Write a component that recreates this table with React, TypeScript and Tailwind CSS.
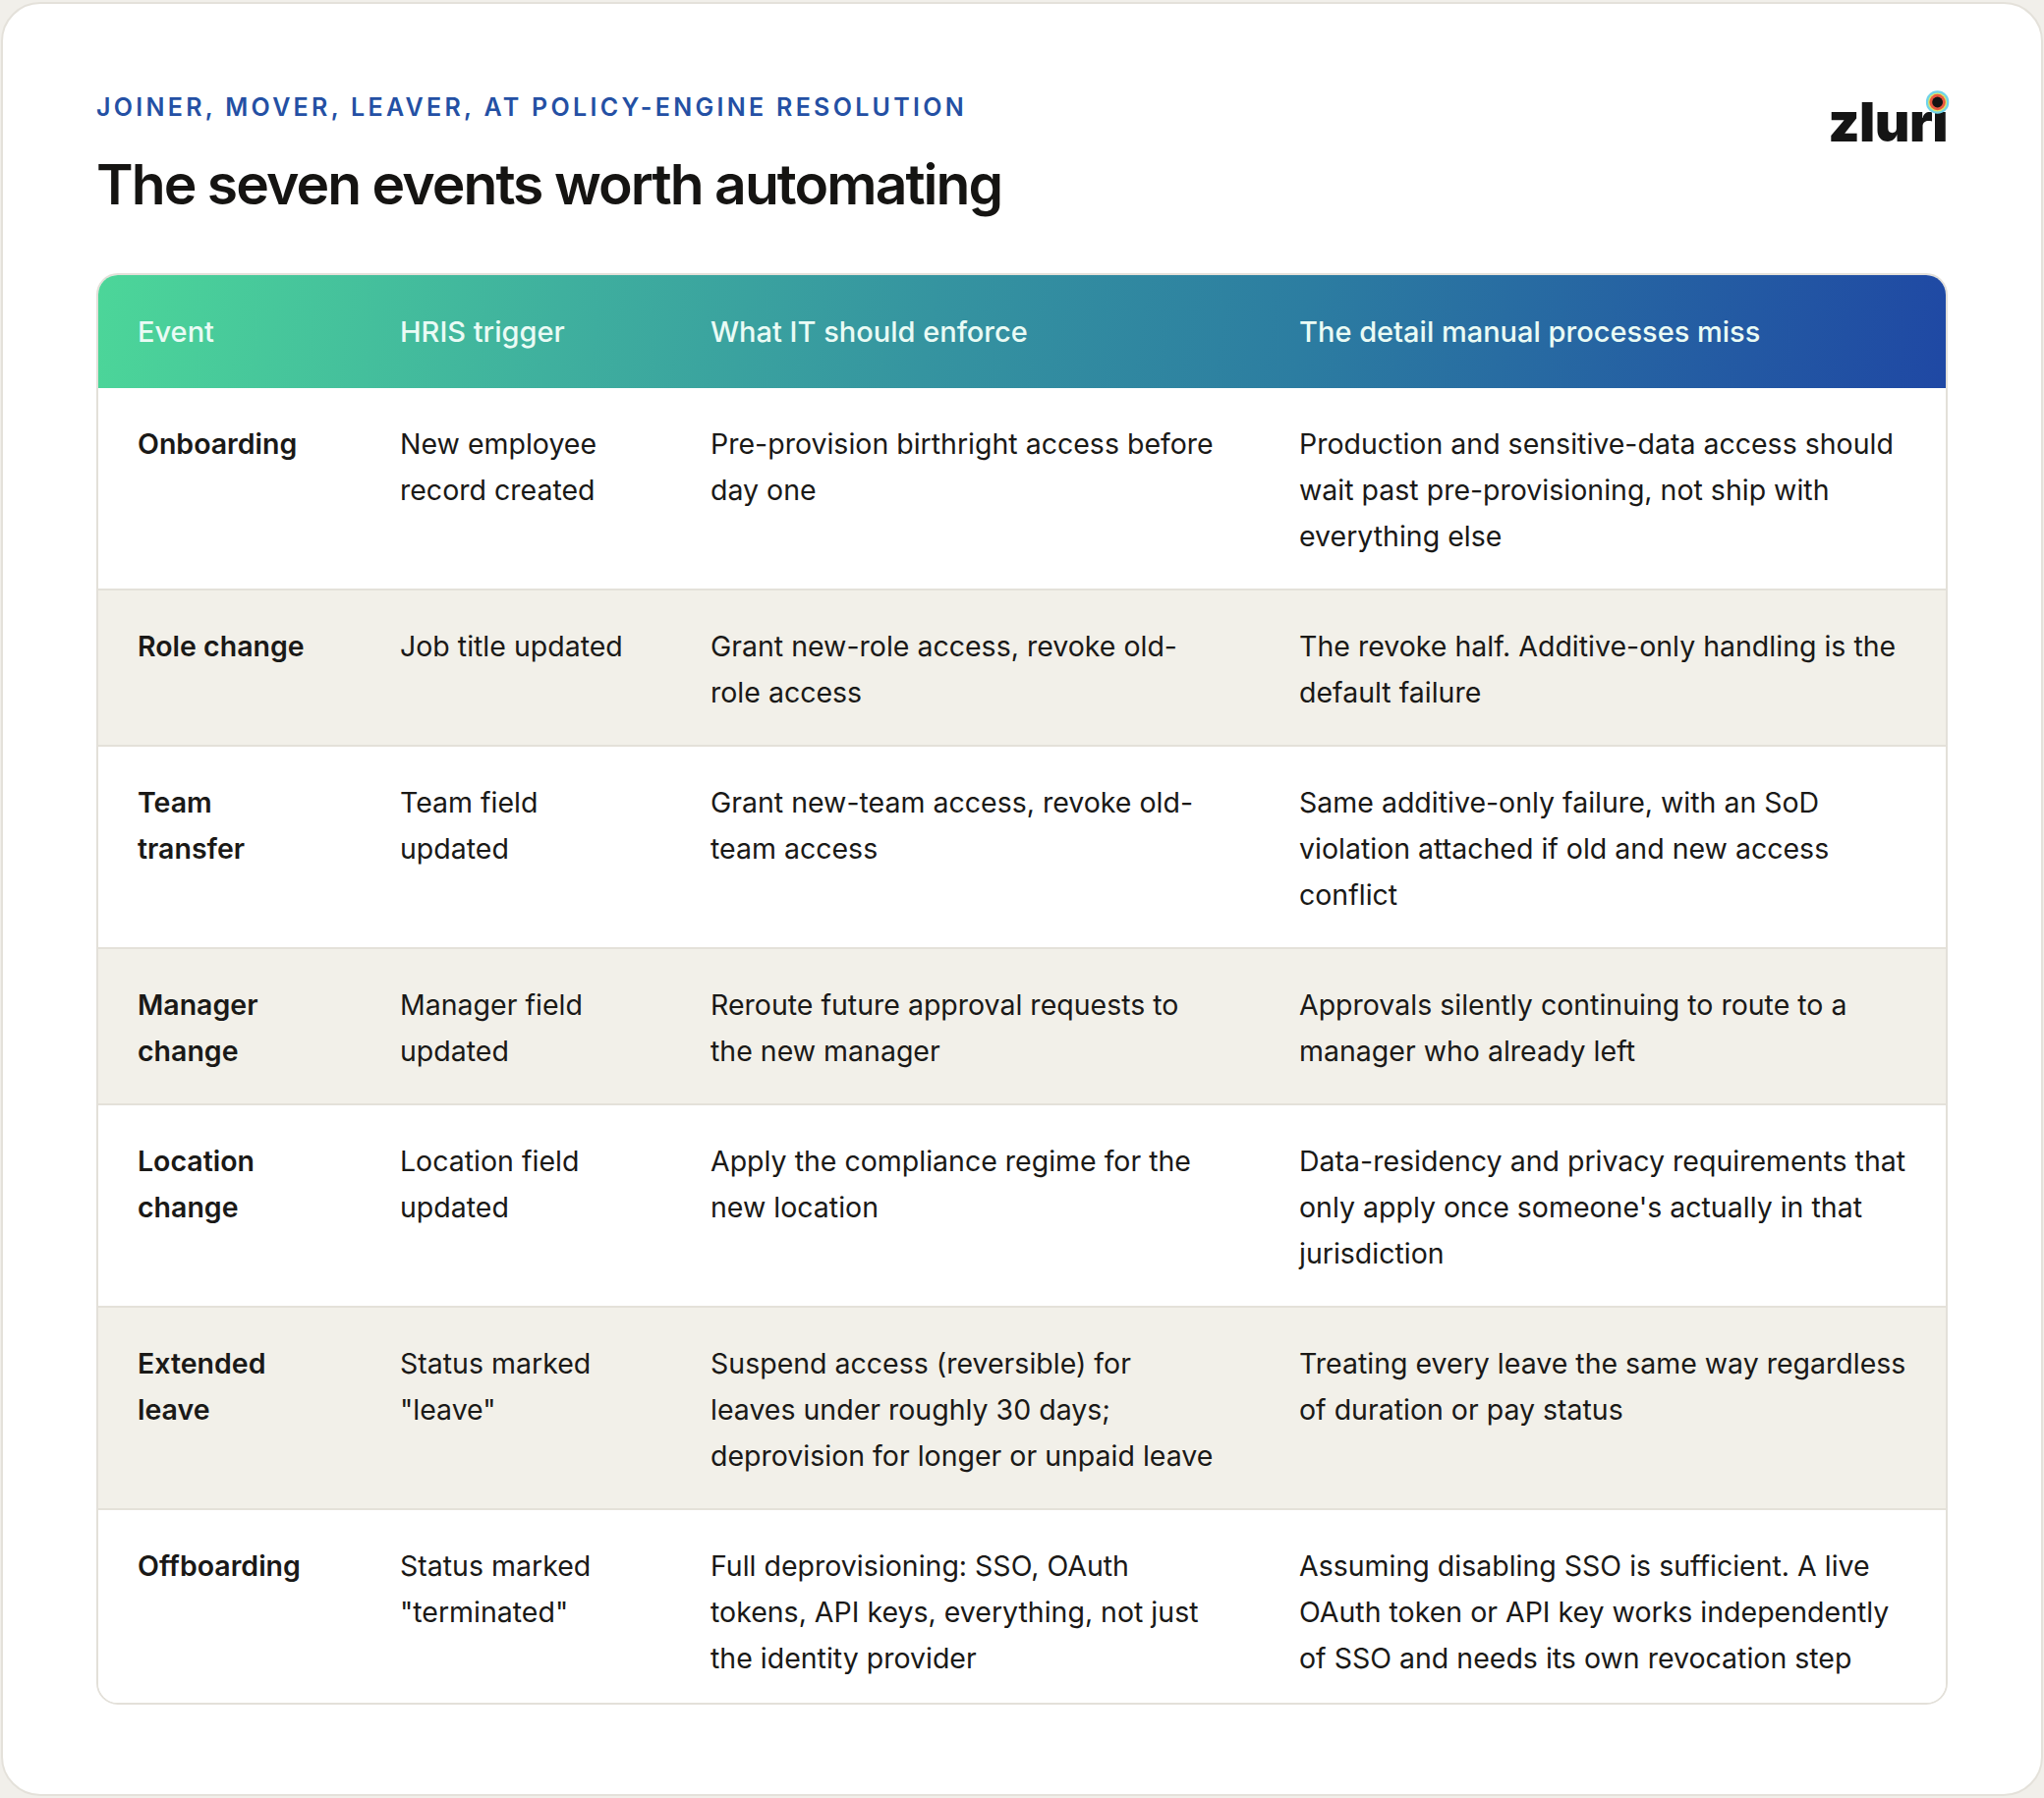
const rows = [
  {
    event: "Onboarding",
    trigger: "New employee record created",
    enforce: "Pre-provision birthright access before day one",
    miss: "Production and sensitive-data access should wait past pre-provisioning, not ship with everything else",
  },
  {
    event: "Role change",
    trigger: "Job title updated",
    enforce: "Grant new-role access, revoke old-role access",
    miss: "The revoke half. Additive-only handling is the default failure",
  },
  {
    event: "Team transfer",
    trigger: "Team field updated",
    enforce: "Grant new-team access, revoke old-team access",
    miss: "Same additive-only failure, with an SoD violation attached if old and new access conflict",
  },
  {
    event: "Manager change",
    trigger: "Manager field updated",
    enforce: "Reroute future approval requests to the new manager",
    miss: "Approvals silently continuing to route to a manager who already left",
  },
  {
    event: "Location change",
    trigger: "Location field updated",
    enforce: "Apply the compliance regime for the new location",
    miss: "Data-residency and privacy requirements that only apply once someone's actually in that jurisdiction",
  },
  {
    event: "Extended leave",
    trigger: 'Status marked "leave"',
    enforce: "Suspend access (reversible) for leaves under roughly 30 days; deprovision for longer or unpaid leave",
    miss: "Treating every leave the same way regardless of duration or pay status",
  },
  {
    event: "Offboarding",
    trigger: 'Status marked "terminated"',
    enforce: "Full deprovisioning: SSO, OAuth tokens, API keys, everything, not just the identity provider",
    miss: "Assuming disabling SSO is sufficient. A live OAuth token or API key works independently of SSO and needs its own revocation step",
  },
];

const ZluriLogo = () => (
  <div className="flex items-end text-[55px] leading-none font-black tracking-[-0.01em] text-[#151515]">
    <span>zlur</span>
    <span className="relative">
      ı
      {/* the dot of the i is a coloured ring */}
      <svg
        viewBox="0 0 24 24"
        className="absolute left-1/2 top-[-5px] h-[24px] w-[24px] -translate-x-[60%]"
      >
        <circle cx="12" cy="12" r="11.8" fill="#6fd4ea" />
        <circle cx="12" cy="12" r="9.6" fill="#d9e76c" />
        <circle cx="12" cy="12" r="8.2" fill="#ea5840" />
        <circle cx="12" cy="12" r="5.4" fill="#141414" />
      </svg>
    </span>
  </div>
);

export default function App() {
  return (
    <div className="w-[2080px] h-[1830px] bg-[#f1efea] px-[1px] pt-[2px] pb-[2px] font-['Inter','Liberation_Sans',sans-serif]">
      <div className="h-full rounded-[40px] border-2 border-[#e4e1da] bg-white px-[95px] pt-[93px]">
        {/* Heading */}
        <div className="flex items-start justify-between">
          <div>
            <div className="text-[25px] leading-none font-semibold uppercase tracking-[0.132em] text-[#2450a4]">
              Joiner, mover, leaver, at policy-engine resolution
            </div>
            <h1 className="mt-[37px] text-[57px] leading-none font-semibold tracking-[-0.034em] text-[#151412]">
              The seven events worth automating
            </h1>
          </div>
          <ZluriLogo />
        </div>

        {/* Table */}
        <div className="mt-[62px] overflow-hidden rounded-[22px] border-2 border-[#e3e0d9]">
          <div className="grid grid-cols-[267px_316px_599px_1fr] bg-[linear-gradient(100deg,#4cd699_0%,#3fb09e_25%,#3594a0_45%,#2c7da1_65%,#1f48a4_100%)] py-[34px] text-[29px] leading-[47px] font-medium text-[#eafbf5]">
            <div className="px-[40px]">Event</div>
            <div className="px-[40px]">HRIS trigger</div>
            <div className="px-[40px]">What IT should enforce</div>
            <div className="pl-[40px] pr-[24px]">The detail manual processes miss</div>
          </div>

          {rows.map((row, i) => (
            <div
              key={row.event}
              className={
                "grid grid-cols-[267px_316px_599px_1fr] text-[28.5px] leading-[47px] text-[#1a1917] " +
                (i > 0 ? "border-t-2 border-[#e4e1d9] " : "") +
                (i % 2 === 1 ? "bg-[#f2f0e9] " : "bg-white ") +
                (i === rows.length - 1 ? "pt-[33px] pb-[22px]" : "pt-[33px] pb-[30px]")
              }
            >
              <div className="px-[40px] font-semibold">{row.event}</div>
              <div className="px-[40px]">{row.trigger}</div>
              <div className="px-[40px]">{row.enforce}</div>
              <div className="pl-[40px] pr-[24px]">{row.miss}</div>
            </div>
          ))}
        </div>
      </div>
    </div>
  );
}
